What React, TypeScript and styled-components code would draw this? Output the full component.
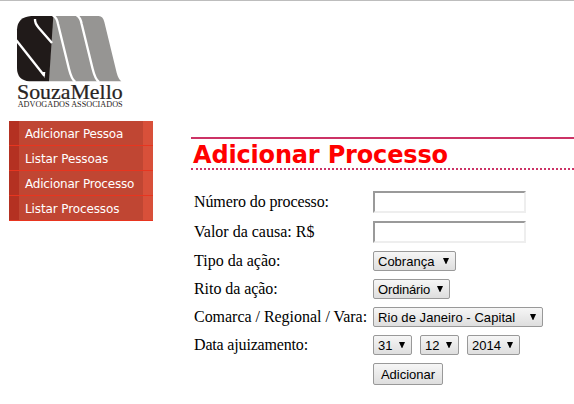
import React from "react";
import styled, { createGlobalStyle } from "styled-components";

const GlobalStyle = createGlobalStyle`
  * { box-sizing: border-box; }
  body { margin: 0; background: #fff; color: #000; overflow: hidden; }
`;

const Page = styled.div`
  width: 574px;
  height: 404px;
  border-top: 1px solid #bdbdbd;
  display: flex;
  overflow: hidden;
`;

const Sidebar = styled.aside`
  width: 191px;
  flex: none;
  padding: 14px 0 0 9px;
`;

const Logo = styled.svg`
  display: block;
  width: 120px;
  height: 97px;
  margin: 0 0 9px 6px;
`;

const Menu = styled.nav`
  width: 144px;
`;

const MenuLink = styled.a<{ $tracking: number }>`
  display: block;
  height: 25px;
  padding: 1px 0 0 6px;
  border-left: 10px solid #b43122;
  border-right: 10px solid #d8503a;
  background: #c04633;
  color: #fff;
  font: 12px/24px "DejaVu Sans", sans-serif;
  letter-spacing: ${(p) => p.$tracking}px;
  text-decoration: none;
  white-space: nowrap;
  position: relative;

  &::after {
    content: "";
    position: absolute;
    inset: auto -10px 0 -10px;
    height: 1px;
    background: #e8351f;
  }
`;

const Content = styled.main`
  flex: 1;
  min-width: 0;
  padding-top: 136px;
`;

const Title = styled.h1`
  margin: 0;
  height: 33px;
  padding-left: 2px;
  border-top: 2px solid #cc3366;
  border-bottom: 2px dotted #cc3366;
  color: #f00;
  font: bold 24px/32px "DejaVu Sans", sans-serif;
  letter-spacing: -0.17px;
  white-space: nowrap;
`;

const Form = styled.form`
  display: grid;
  grid-template-columns: 179px 1fr;
  grid-template-rows: 22px 22px 20px 20px 20px 20px 22px;
  row-gap: 8px;
  padding: 21px 0 0 3px;
`;

const Label = styled.label<{ $tracking?: number }>`
  font: 16px/20px "Liberation Serif", serif;
  letter-spacing: ${(p) => p.$tracking ?? 0}px;
  white-space: nowrap;
  align-self: center;
`;

const Field = styled.div`
  display: flex;
  gap: 8px;
  grid-column: 2;
`;

const TextInput = styled.input`
  width: 153px;
  height: 22px;
  padding: 1px;
  border: 2px solid;
  border-color: #9a9a9a #eee #eee #9a9a9a;
  border-radius: 0;
  background: #fff;
  outline: none;
`;

const SelectBox = styled.div<{ $width: number }>`
  position: relative;
  width: ${(p) => p.$width}px;
  height: 20px;
`;

const NativeSelect = styled.select<{ $tracking: number }>`
  appearance: none;
  display: block;
  width: 100%;
  height: 20px;
  margin: 0;
  padding: 1px 0 0 4px;
  border: 1px solid #999;
  border-radius: 2px;
  background: linear-gradient(#f6f6f6, #dedede);
  color: #000;
  font: 13px "Liberation Sans", sans-serif;
  letter-spacing: ${(p) => p.$tracking}px;
`;

const Arrow = styled.svg`
  position: absolute;
  right: 7px;
  top: 7px;
  width: 6px;
  height: 6px;
  pointer-events: none;
`;

const SubmitButton = styled.button`
  width: 70px;
  height: 22px;
  padding: 1px 0 0;
  border: 1px solid #999;
  border-radius: 2px;
  background: linear-gradient(#f6f6f6, #dedede);
  color: #000;
  font: 13px "Liberation Sans", sans-serif;
`;

interface SelectProps {
  value: string;
  width: number;
  label: string;
  tracking?: number;
}

function Select({ value, width, label, tracking = 0 }: SelectProps) {
  return (
    <SelectBox $width={width}>
      <NativeSelect aria-label={label} defaultValue={value} $tracking={tracking}>
        <option>{value}</option>
      </NativeSelect>
      <Arrow viewBox="0 0 6 6">
        <path d="M0 0H6L3.3 6H2.7Z" />
      </Arrow>
    </SelectBox>
  );
}

const menuItems = [
  { text: "Adicionar Pessoa", tracking: -0.2 },
  { text: "Listar Pessoas", tracking: -0.12 },
  { text: "Adicionar Processo", tracking: -0.2 },
  { text: "Listar Processos", tracking: -0.12 },
];

function BrandLogo() {
  return (
    <Logo viewBox="45 45 360 291" role="img" aria-label="SouzaMello Advogados Associados">
      <path fill="#969593" d="M158 48H296Q309 48 313 66L350 218Q355 237 364 244H146Z" />
      <path fill="#201a19" d="M94 48H160L147 244H88Q51 241 51 204V88Q53 51 94 48Z" />
      <g fill="none" stroke="#fff" strokeWidth="7">
        <path d="M49 121L133 227" />
        <path d="M133 235L128 216H136Z" fill="#fff" stroke="none" />
        <path d="M105 57Q104 69 116 83L156 129" />
        <path d="M158 46Q171 53 174 72L207 207Q215 239 226 246" />
        <path d="M230 46Q242 53 245 72L278 207Q286 239 297 246" />
      </g>
      <g fill="#292423" fontFamily="'Palatino Linotype', 'Liberation Serif', serif">
        <text x="51" y="297" fontSize="61" textLength="317" lengthAdjust="spacingAndGlyphs" stroke="#292423" strokeWidth=".7">SouzaMello</text>
        <text x="53" y="321" fontSize="22" textLength="315" lengthAdjust="spacingAndGlyphs">ADVOGADOS ASSOCIADOS</text>
      </g>
    </Logo>
  );
}

export default function App() {
  return (
    <>
      <GlobalStyle />
      <Page>
        <Sidebar>
          <BrandLogo />
          <Menu>
            {menuItems.map((item) => (
              <MenuLink key={item.text} href="#" $tracking={item.tracking}>{item.text}</MenuLink>
            ))}
          </Menu>
        </Sidebar>
        <Content>
          <Title>Adicionar Processo</Title>
          <Form>
            <Label htmlFor="numero" $tracking={-0.1}>Número do processo:</Label>
            <Field><TextInput id="numero" /></Field>
            <Label htmlFor="valor">Valor da causa: R$</Label>
            <Field><TextInput id="valor" /></Field>
            <Label>Tipo da ação:</Label>
            <Field><Select label="Tipo da ação" value="Cobrança" width={83} /></Field>
            <Label $tracking={-0.06}>Rito da ação:</Label>
            <Field><Select label="Rito da ação" value="Ordinário" width={77} tracking={-0.15} /></Field>
            <Label $tracking={-0.03}>Comarca / Regional / Vara:</Label>
            <Field><Select label="Comarca" value="Rio de Janeiro - Capital" width={170} tracking={0.06} /></Field>
            <Label $tracking={-0.17}>Data ajuizamento:</Label>
            <Field>
              <Select label="Dia" value="31" width={39} />
              <Select label="Mês" value="12" width={39} />
              <Select label="Ano" value="2014" width={53} />
            </Field>
            <Field><SubmitButton type="button">Adicionar</SubmitButton></Field>
          </Form>
        </Content>
      </Page>
    </>
  );
}
